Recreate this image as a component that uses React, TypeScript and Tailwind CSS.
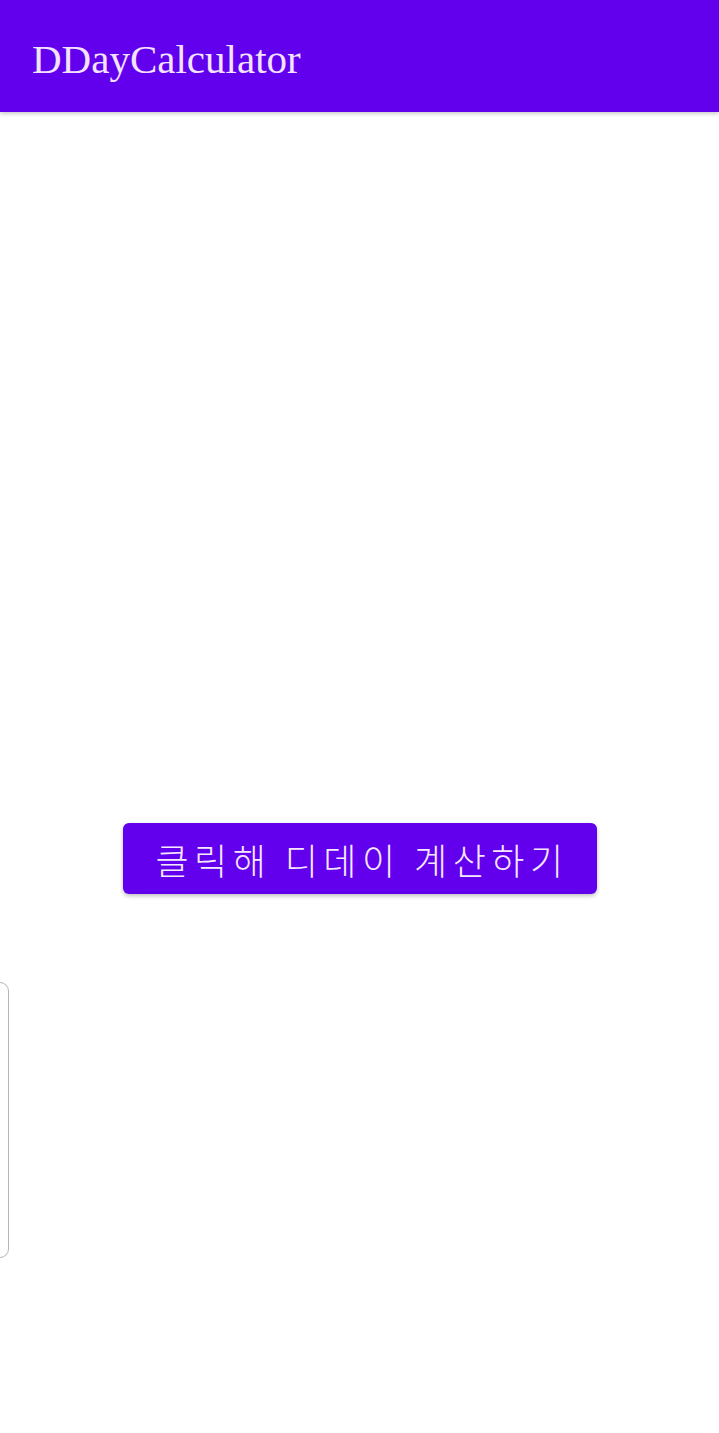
export default function App() {
  return (
    <div className="w-[719px] h-[1433px] bg-white overflow-hidden relative">
      <div className="h-[112px] bg-[#6200ee] flex items-center pl-[32px] shadow-[0_2px_4px_rgba(0,0,0,0.2)] relative z-10">
        <span
          className="text-[41px] text-[#f3e3ff] leading-none mt-[6px]"
          style={{ fontFamily: '"Liberation Serif", "DejaVu Serif", serif' }}
        >
          DDayCalculator
        </span>
      </div>
      <div className="flex flex-col">
        <button
          className="mt-[711px] mx-auto w-[474px] h-[71px] bg-[#6200ee] rounded-[6px] shadow-[0_2px_4px_rgba(0,0,0,0.25)] flex items-center justify-center pl-[5px] text-[#f6e8ff] text-[36px] tracking-[5.5px] font-light"
          style={{ fontFamily: '"Noto Sans CJK KR", "Noto Sans", sans-serif' }}
        >
          클릭해 디데이 계산하기
        </button>
        <div className="mt-[88px] ml-[-300px] w-[309px] h-[276px] border border-[#b5b5b5] rounded-[9px]" />
      </div>
    </div>
  );
}
